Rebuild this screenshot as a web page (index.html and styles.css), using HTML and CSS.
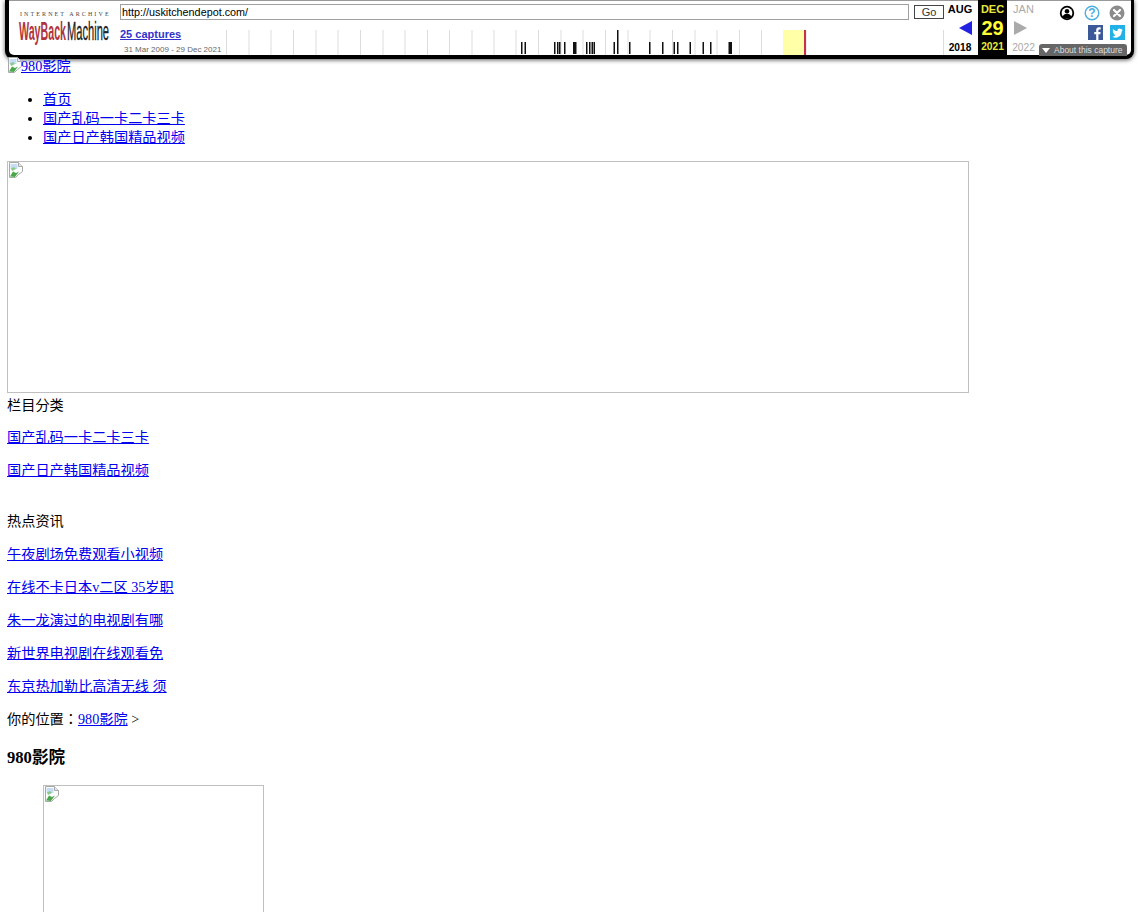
FILE: index.html
```html
<!DOCTYPE html>
<html>
<head>
<meta charset="utf-8">
<title>980影院</title>
<link rel="stylesheet" href="styles.css">
</head>
<body>
<header class="wb">
  <div class="wb-inner">
    <a class="wb-logo" href="#">
      <span class="wb-ia">INTERNET ARCHIVE</span>
      <svg class="wb-mark" width="92" height="26" viewBox="0 0 92 26" role="img" aria-label="WayBack Machine">
        <text class="mark-way" x="-1" y="21" textLength="47" lengthAdjust="spacingAndGlyphs">WayBack</text>
        <text class="mark-machine" x="47" y="21" textLength="42" lengthAdjust="spacingAndGlyphs">Machine</text>
      </svg>
    </a>
    <div class="wb-mid">
      <form class="wb-form">
        <input class="wb-url" type="text" value="http://uskitchendepot.com/">
        <button class="wb-go" type="button">Go</button>
      </form>
      <div class="wb-cal">
        <div class="wb-caps">
          <a class="wb-count" href="#">25 captures</a>
          <span class="wb-range">31 Mar 2009 - 29 Dec 2021</span>
        </div>
        <svg class="wb-spark" width="722" height="25" viewBox="226 30 722 25">
          <g class="ticks">
            <path d="M226.5 30v25M249 30v25M271 30v25M293.500 30v25M316 30v25M338 30v25M360.500 30v25M383 30v25M405 30v25M427.500 30v25M449.500 30v25M472 30v25M494 30v25M516 30v25M538.500 30v25M561 30v25M583 30v25M605.500 30v25M628 30v25M650 30v25M672.500 30v25M695 30v25M717 30v25M739.500 30v25M761.500 30v25M784 30v25M806 30v25M943.500 30v25"/>
          </g>
          <rect class="cur" x="783" y="30" width="22" height="25"/>
          <rect class="cur-line" x="804" y="30" width="2" height="25"/>
          <g class="bars">
            <rect x="521" y="42" width="1.500" height="12"/><rect x="524.500" y="42" width="1.500" height="12"/>
            <rect x="554" y="42" width="1.500" height="12"/><rect x="557" y="42" width="1.500" height="12"/><rect x="559" y="42" width="1.500" height="12"/>
            <rect x="564" y="42" width="1.500" height="12"/><rect x="573" y="42" width="3.500" height="12"/>
            <rect x="586" y="42" width="1.500" height="12"/><rect x="589" y="42" width="1.500" height="12"/><rect x="591.500" y="42" width="1.500" height="12"/><rect x="593.500" y="42" width="1.500" height="12"/>
            <rect x="613.500" y="42" width="1.500" height="12"/><rect x="617" y="30" width="1.500" height="24"/>
            <rect x="629" y="42" width="1.500" height="12"/><rect x="649" y="42" width="1.500" height="12"/><rect x="662" y="42" width="1.500" height="12"/>
            <rect x="673.500" y="42" width="1.500" height="12"/><rect x="677" y="42" width="1.500" height="12"/>
            <rect x="689.500" y="42" width="1.500" height="12"/><rect x="702.500" y="42" width="1.500" height="12"/><rect x="710" y="42" width="1.500" height="12"/>
            <rect x="728.500" y="42" width="3.500" height="12"/>
          </g>
        </svg>
      </div>
    </div>
    <nav class="wb-nav">
      <div class="wb-col wb-prev">
        <a class="wb-mon" href="#">AUG</a>
        <svg class="wb-arrow" width="13" height="14" viewBox="0 0 13 14"><path class="arrow-on" d="M13 0v14L0 7z"/></svg>
        <a class="wb-yr" href="#">2018</a>
      </div>
      <div class="wb-col wb-now">
        <span class="wb-mon">DEC</span>
        <span class="wb-day">29</span>
        <span class="wb-yr">2021</span>
      </div>
      <div class="wb-col wb-off">
        <span class="wb-mon">JAN</span>
        <svg class="wb-arrow" width="13" height="14" viewBox="0 0 13 14"><path class="arrow-off" d="M0 0v14l13-7z"/></svg>
        <span class="wb-yr">2022</span>
      </div>
    </nav>
    <div class="wb-tools">
      <div class="wb-row">
        <svg width="16" height="16" viewBox="0 0 16 16"><circle cx="8" cy="8" r="7.200" fill="#000"/><circle cx="8" cy="8" r="5.400" fill="#fff"/><circle cx="8" cy="6.300" r="2.300" fill="#000"/><path d="M3.600 12.200c.6-2.500 2.300-3.400 4.400-3.400s3.800.9 4.400 3.400A5.600 5.600 0 0 1 8 13.500a5.600 5.600 0 0 1-4.400-1.300z" fill="#000"/></svg>
        <svg width="16" height="16" viewBox="0 0 16 16"><circle cx="8" cy="8" r="6.800" fill="#fff" stroke="#4eaee0" stroke-width="1.400"/><text class="help" x="8" y="12" text-anchor="middle">?</text></svg>
        <svg width="16" height="16" viewBox="0 0 16 16"><circle cx="8" cy="8" r="7.500" fill="#8c8c8c"/><path d="M5 5l6 6M11 5l-6 6" stroke="#fff" stroke-width="2.200" stroke-linecap="round"/></svg>
      </div>
      <div class="wb-row wb-row-social">
        <svg width="15" height="15" viewBox="0 0 15 15"><rect width="15" height="15" fill="#3b5998"/><path d="M10.400 15V9.200h1.900l.3-2.300h-2.200V5.500c0-.7.200-1.100 1.100-1.100h1.200V2.300c-.3 0-.9-.1-1.700-.1-1.700 0-2.800 1-2.800 2.900v1.800H6.300v2.300h1.900V15z" fill="#fff"/></svg>
        <svg width="15" height="15" viewBox="0 0 15 15"><rect width="15" height="15" fill="#22b1e6"/><path d="M12.600 4.500c-.4.200-.8.300-1.200.3.400-.3.800-.7.900-1.100-.4.200-.9.400-1.300.5a2.100 2.100 0 0 0-3.600 1.900c-1.700-.1-3.200-.9-4.300-2.200-.6 1-.3 2.200.6 2.800-.3 0-.7-.1-.9-.3 0 1 .7 1.900 1.700 2.100-.3.100-.6.100-1 0 .3.900 1.100 1.400 2 1.500A4.200 4.200 0 0 1 2.400 11.700a6 6 0 0 0 9.200-5.300c.4-.3.800-.6 1-1.900z" fill="#fff"/></svg>
      </div>
    </div>
    <a class="wb-about" href="#"><span class="wb-tri"></span>About this capture</a>
  </div>
</header>

<main class="page">
  <a class="logo-link" href="#"><svg class="broken" width="16" height="16" viewBox="0 0 16 16"><use href="#broken-icon"/></svg>980影院</a>

  <ul class="nav-list">
    <li><a href="#">首页</a></li>
    <li><a href="#">国产乱码一卡二卡三卡</a></li>
    <li><a href="#">国产日产韩国精品视频</a></li>
  </ul>

  <div class="banner"><svg class="broken" width="16" height="16" viewBox="0 0 16 16"><use href="#broken-icon"/></svg></div>

  <section class="block">
    <div class="block-title">栏目分类</div>
    <p><a href="#">国产乱码一卡二卡三卡</a></p>
    <p><a href="#">国产日产韩国精品视频</a></p>
  </section>

  <section class="block block-news">
    <div class="block-title">热点资讯</div>
    <p><a href="#">午夜剧场免费观看小视频</a></p>
    <p><a href="#">在线不卡日本v二区 35岁职</a></p>
    <p><a href="#">朱一龙演过的电视剧有哪</a></p>
    <p><a href="#">新世界电视剧在线观看免</a></p>
    <p><a href="#">东京热加勒比高清无线 须</a></p>
  </section>

  <div class="crumbs">你的位置：<a href="#">980影院</a> &gt;</div>
  <h3 class="title">980影院</h3>
  <ul class="thumbs">
    <li class="thumb"><svg class="broken" width="16" height="16" viewBox="0 0 16 16"><use href="#broken-icon"/></svg></li>
  </ul>
</main>

<svg class="defs" width="0" height="0">
  <defs>
    <g id="broken-icon">
      <path d="M1.500 .5h9l4 4v5l-4 3-3 3h-6z" fill="#fff" stroke="#a8a8a8"/>
      <path d="M10.500 .5v4h4" fill="#e8e8e8" stroke="#a8a8a8"/>
      <path d="M2.500 2h7v5h-7z" fill="#c4dcf4"/>
      <path d="M2 14.500l3-5 3 1.500 3-1.500-4 5.500z" fill="#4aa84a"/>
      <path d="M3 6.500l3-1.500 2 2-4 2z" fill="#8cc88c"/>
    </g>
  </defs>
</svg>
</body>
</html>
```

FILE: styles.css
```css
html, body { margin: 0; padding: 0; height: 912px; overflow: hidden; background: #fff; }
body { font-family: "Liberation Serif", "Noto Sans CJK JP", serif; font-size: 14.2px; color: #000; }
a { color: #00e; }

/* Wayback toolbar */
.wb { margin: 0 6px 0 5px; height: 59px; box-sizing: border-box; background: #000; border-radius: 0 0 8px 8px; box-shadow: 0 1px 4px #555; padding: 0 3px 4px 4px; font-family: "Liberation Sans", Arial, sans-serif; }
.wb-inner { position: relative; display: flex; height: 55px; background: #fff; border-radius: 0 0 5px 5px; border-top: 1px solid #999; box-sizing: border-box; color: #000; }
.wb-logo { display: flex; flex-direction: column; width: 100px; margin-left: 11px; text-decoration: none; flex: none; }
.wb-ia { margin-top: 9px; height: 8px; font-size: 6px; line-height: 8px; letter-spacing: 2.100px; color: #444; white-space: nowrap; font-family: "Liberation Serif", serif; }
.wb-mark { display: block; margin-top: 1px; overflow: visible; }
.mark-way { font: bold 26px "Liberation Sans", sans-serif; fill: #b0343c; }
.mark-machine { font: 26px "Liberation Sans", sans-serif; fill: #222; stroke: #222; stroke-width: .3px; }
.wb-mid { width: 825px; flex: none; }
.wb-form { display: flex; align-items: center; gap: 5px; height: 16px; margin-top: 3px; width: 824px; }
.wb-url { box-sizing: border-box; width: 789px; height: 16px; padding: 0 1px; border: 1px solid #a0a0a0; font: 10.800px "Liberation Sans", sans-serif; color: #000; outline: 0; border-radius: 0; }
.wb-go { box-sizing: border-box; width: 30px; height: 14px; padding: 0; border: 1px solid #444; background: #fff; font: 11px "Liberation Sans", sans-serif; color: #333; border-radius: 0; }
.wb-cal { display: flex; margin-top: 10px; height: 25px; }
.wb-caps { width: 106px; flex: none; display: flex; flex-direction: column; }
.wb-count { font-size: 11px; font-weight: 700; line-height: 12px; color: #33c; margin-top: -2px; }
.wb-range { font-size: 8px; line-height: 11px; color: #666; margin: 4px 0 0 4px; white-space: nowrap; }
.wb-spark { display: block; flex: none; }
.ticks path { stroke: #ddd; stroke-width: 1; fill: none; }
.cur { fill: #ffffa8; }
.cur-line { fill: #c8304a; }
.bars rect { fill: #111; }
.wb-nav { display: flex; flex: none; font-weight: 700; text-align: center; }
.wb-col { display: flex; flex-direction: column; align-items: center; width: 29px; }
.wb-prev { width: 30px; margin-right: 3px; }
.wb-off { margin-left: 2px; }
.wb-mon { font-size: 11px; line-height: 12px; margin-top: 2px; color: #000; text-decoration: none; }
.wb-yr { font-size: 10.200px; line-height: 12px; margin-top: 2px; color: #000; text-decoration: none; }
.wb-arrow { margin-top: 6px; height: 14px; margin-bottom: 5px; }
.wb-prev .wb-arrow { margin-left: 10px; }
.wb-off .wb-arrow { margin-left: -6px; }
.arrow-on { fill: #2222e0; }
.arrow-off { fill: #aaa; }
.wb-now { background: #000; margin-top: -1px; padding-top: 1px; height: 55px; box-sizing: border-box; }
.wb-now .wb-mon, .wb-now .wb-yr { color: #e8e840; }
.wb-day { font-size: 20px; line-height: 24px; color: #ff3; margin-top: 1px; margin-bottom: -1px; }
.wb-off .wb-mon, .wb-off .wb-yr { color: #aaa; font-weight: 400; }
.wb-tools { display: flex; flex-direction: column; align-items: flex-end; flex: 1; padding-right: 6px; }
.wb-row { display: flex; gap: 9px; margin-top: 4px; }
.wb-row-social { gap: 7px; margin-top: 4px; }
.help { font: bold 12px "Liberation Sans", sans-serif; fill: #4eaee0; }
.wb-about { position: absolute; right: 4px; bottom: -1px; display: flex; align-items: center; gap: 4px; height: 12px; width: 88px; box-sizing: border-box; padding-left: 3px; background: #666; border-radius: 3px 3px 0 0; color: #ddd; font-size: 8.500px; text-decoration: none; white-space: nowrap; }
.wb-tri { width: 0; height: 0; border: 4px solid transparent; border-top: 5px solid #fff; border-bottom: 0; }

/* Page body */
.page { padding: 0 8px 0 7px; }
.defs { position: absolute; }
.broken { flex: none; }
.logo-link { display: block; height: 16px; line-height: 16px; margin-top: -2px; }
.logo-link .broken { vertical-align: -2px; margin-right: -2px; }
.nav-list { margin: 17px 0 14px; padding-left: 36px; }
.nav-list li { line-height: 19px; }
.banner { box-sizing: border-box; width: 962px; height: 232px; border: 1px solid #c0c0c0; }
.banner .broken, .thumb .broken { display: block; }
.block-title { line-height: 17px; margin-top: 4px; }
.block p { margin: 16px 0; line-height: 17px; }
.block-title + p { margin-top: 15px; }
.block-news { margin-top: 34px; }
.block-news .block-title + p { margin-top: 16px; }
.block-news p:last-child { margin-bottom: 0; }
.crumbs { margin-top: 16px; line-height: 17px; }
.title { font-size: 16.600px; line-height: 22px; margin: 19px 0 0; }
.thumbs { list-style: none; margin: 16px 0 0; padding-left: 36px; }
.thumb { box-sizing: border-box; width: 221px; height: 210px; border: 1px solid #c0c0c0; }
```
